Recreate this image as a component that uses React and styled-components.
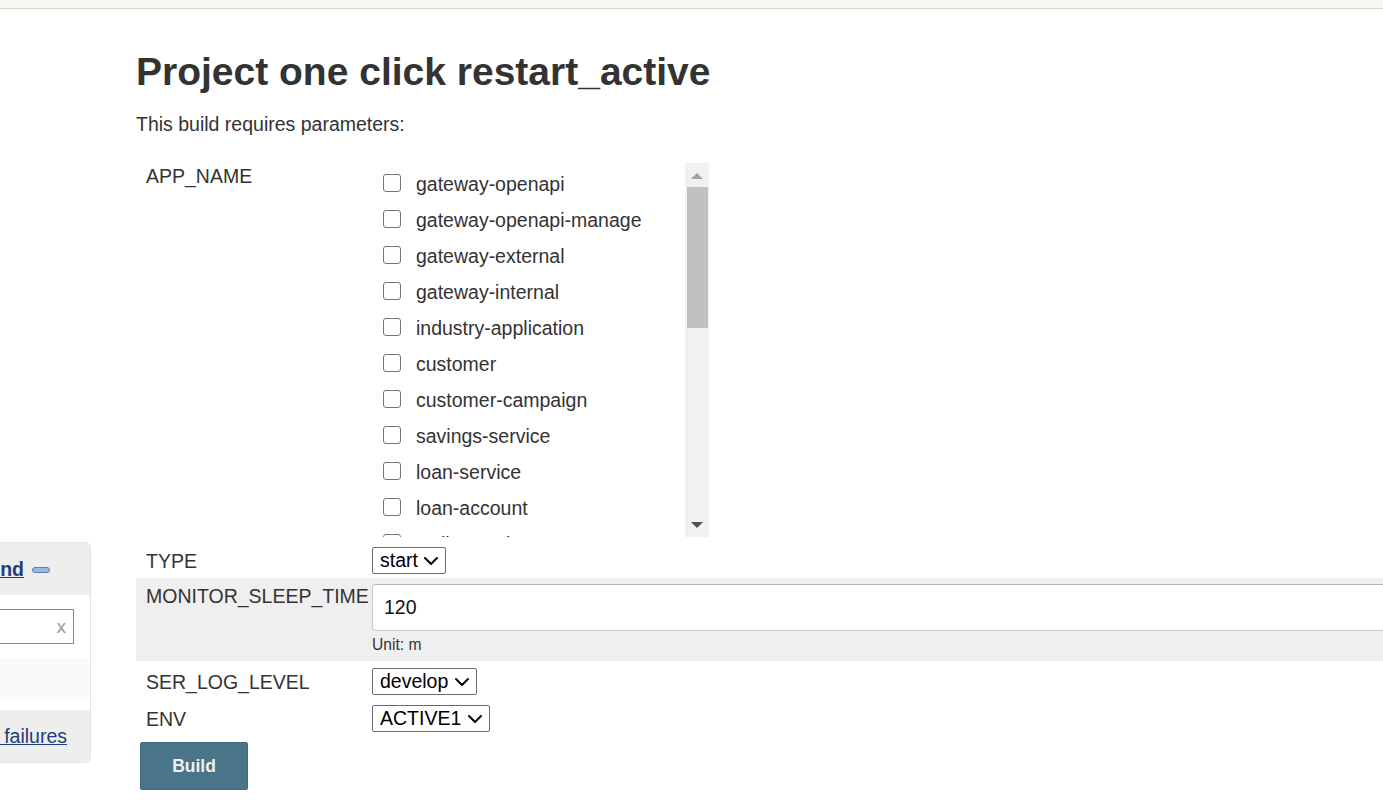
import React from 'react';
import styled, { createGlobalStyle } from 'styled-components';
import { ChevronDown } from 'lucide-react';

const apps = [
  'gateway-openapi',
  'gateway-openapi-manage',
  'gateway-external',
  'gateway-internal',
  'industry-application',
  'customer',
  'customer-campaign',
  'savings-service',
  'loan-service',
  'loan-account',
  'wallet-card',
];

const App = () => {
  return (
    <>
      <GlobalStyle />
      <TopBar />
      <Page>
        <SideColumn>
          <SideCard>
            <SideHeader>
              <SideLink $bold>Legend</SideLink>
              <Collapse />
            </SideHeader>
            <SideFilter>
              <FilterBox>
                <span>x</span>
              </FilterBox>
            </SideFilter>
            <SideEmpty />
            <SideFooter>
              <SideLink>Show all failures</SideLink>
            </SideFooter>
          </SideCard>
        </SideColumn>

        <Main>
          <Title>Project one click restart_active</Title>
          <Intro>This build requires parameters:</Intro>

          <ParamTable>
            <Row $pad="0 0 3px">
              <Label $top="2px">APP_NAME</Label>
              <CheckList>
                <CheckItems>
                  {apps.map((a) => (
                    <CheckItem key={a}>
                      <Box type="checkbox" />
                      <span>{a}</span>
                    </CheckItem>
                  ))}
                </CheckItems>
                <ScrollBar>
                  <Arrow $up />
                  <Thumb />
                  <Track />
                  <Arrow />
                </ScrollBar>
              </CheckList>
            </Row>

            <Row $pad="7px 0 4px" $center>
              <Label>TYPE</Label>
              <Dropdown value="start" />
            </Row>

            <Row $pad="6px 0 7px" $shaded>
              <Label $top="1px">MONITOR_SLEEP_TIME</Label>
              <div>
                <TextField defaultValue="120" />
                <Hint>Unit: m</Hint>
              </div>
            </Row>

            <Row $pad="7px 0 5px" $center>
              <Label>SER_LOG_LEVEL</Label>
              <Dropdown value="develop" />
            </Row>

            <Row $pad="5px 0 5px" $center>
              <Label>ENV</Label>
              <Dropdown value="ACTIVE1" />
            </Row>
          </ParamTable>

          <BuildButton>Build</BuildButton>
        </Main>
      </Page>
    </>
  );
};

const Dropdown = ({ value }) => (
  <SelectWrap>
    <Select defaultValue={value}>
      <option>{value}</option>
    </Select>
    <Chevron size={24} strokeWidth={2} />
  </SelectWrap>
);

//Styled Components
const GlobalStyle = createGlobalStyle`
  html, body {
    margin: 0;
    padding: 0;
    background: #fff;
    overflow: hidden;
  }
  body {
    font-family: "Liberation Sans", Arial, sans-serif;
    font-size: 19.5px;
    line-height: 1.15;
    color: #333;
  }
`;

const TopBar = styled.div`
  height: 8px;
  background: #f5f8f0;
  border-bottom: 1px solid #d3d6ce;
`;

const Page = styled.div`
  display: flex;
  align-items: flex-start;
`;

const SideColumn = styled.div`
  flex: 0 0 136px;
  padding-top: 533px;
`;

const SideCard = styled.div`
  width: 240px;
  margin-left: -151px;
  border: 1px solid #e4e4e4;
  border-radius: 6px;
  overflow: hidden;
  background: #fff;
`;

const SideHeader = styled.div`
  height: 52px;
  background: #eeeeee;
  display: flex;
  align-items: center;
  justify-content: flex-end;
  gap: 8px;
  padding-right: 40px;
`;

const SideLink = styled.a`
  color: #1d3f7a;
  text-decoration: underline;
  font-weight: ${(p) => (p.$bold ? 700 : 400)};
  white-space: nowrap;
`;

const Collapse = styled.span`
  width: 16px;
  height: 4px;
  border: 1px solid #5b80b5;
  border-radius: 3px;
  background: #9fb9dc;
  margin-top: 2px;
`;

const SideFilter = styled.div`
  height: 63px;
  display: flex;
  align-items: center;
  justify-content: flex-end;
  padding-right: 16px;
`;

const FilterBox = styled.div`
  width: 200px;
  height: 35px;
  border: 1px solid #8a8a8a;
  display: flex;
  align-items: center;
  justify-content: flex-end;
  padding-right: 7px;
  box-sizing: border-box;
  color: #9a9a9a;
  font-size: 19px;
`;

const SideEmpty = styled.div`
  height: 42px;
  background: #fafafa;
  margin-bottom: 10px;
`;

const SideFooter = styled.div`
  height: 52px;
  background: #eeeeee;
  display: flex;
  align-items: center;
  justify-content: flex-end;
  padding-right: 23px;
`;

const Main = styled.div`
  flex: 1;
  min-width: 1300px;
`;

const Title = styled.h1`
  margin: 40px 0 19px;
  font-size: 39px;
  line-height: 45px;
  font-weight: 700;
  color: #333;
`;

const Intro = styled.p`
  margin: 0 0 28px;
  line-height: 22px;
`;

const ParamTable = styled.div`
  display: flex;
  flex-direction: column;
`;

const Row = styled.div`
  display: grid;
  grid-template-columns: 236px 1fr;
  align-items: ${(p) => (p.$center ? 'center' : 'start')};
  padding: ${(p) => p.$pad};
  background: ${(p) => (p.$shaded ? '#efefef' : 'transparent')};
`;

const Label = styled.div`
  padding: ${(p) => p.$top || '0'} 0 0 10px;
  line-height: 22px;
  white-space: nowrap;
`;

const CheckList = styled.div`
  width: 337px;
  height: 374px;
  display: flex;
  overflow: hidden;
`;

const CheckItems = styled.div`
  flex: 1;
  padding: 3px 0 0 11px;
  display: flex;
  flex-direction: column;
`;

const CheckItem = styled.label`
  height: 36px;
  display: flex;
  align-items: center;
  gap: 15px;
  flex-shrink: 0;
  white-space: nowrap;
`;

const Box = styled.input`
  appearance: none;
  margin: 0 0 3px;
  width: 18px;
  height: 18px;
  border: 1px solid #767676;
  border-radius: 3px;
  background: #fff;
  box-sizing: border-box;
`;

const ScrollBar = styled.div`
  width: 24px;
  background: #f1f1f1;
  display: flex;
  flex-direction: column;
  align-items: center;
`;

const Arrow = styled.div`
  width: 0;
  height: 0;
  margin: ${(p) => (p.$up ? '10px 0 8px' : '8px 0 9px')};
  border-left: 6px solid transparent;
  border-right: 6px solid transparent;
  ${(p) =>
    p.$up
      ? 'border-bottom: 6px solid #a3a3a3;'
      : 'border-top: 6px solid #505050;'}
`;

const Thumb = styled.div`
  width: 21px;
  height: 141px;
  background: #c1c1c1;
`;

const Track = styled.div`
  flex: 1;
`;

const SelectWrap = styled.div`
  position: relative;
  display: inline-flex;
  justify-self: start;
`;

const Select = styled.select`
  appearance: none;
  font-family: "Liberation Sans", Arial, sans-serif;
  font-size: 19.5px;
  color: #000;
  height: 27px;
  padding: 0 27px 0 7px;
  border: 1px solid #6a6a6a;
  border-radius: 2px;
  background: #fff;
  line-height: 25px;
`;

const Chevron = styled(ChevronDown)`
  position: absolute;
  right: 3px;
  top: 50%;
  transform: translateY(-50%);
  color: #000;
  pointer-events: none;
`;

const TextField = styled.input`
  display: block;
  width: 100%;
  height: 47px;
  box-sizing: border-box;
  padding: 0 11px;
  margin-top: 0;
  border: 1px solid #c9c9c9;
  border-top-color: #b5b5b5;
  border-radius: 4px;
  font-family: "Liberation Sans", Arial, sans-serif;
  font-size: 19.5px;
  color: #111;
  background: #fff;
  margin-bottom: 5px;
`;

const Hint = styled.div`
  font-size: 15.6px;
  line-height: 18px;
  color: #333;
`;

const BuildButton = styled.button`
  margin: 5px 0 0 4px;
  width: 108px;
  height: 48px;
  background: #4a7487;
  color: #f0f0f0;
  font-family: "Liberation Sans", Arial, sans-serif;
  font-size: 17.5px;
  font-weight: 700;
  border: 1px solid #436a7c;
  border-radius: 2px;
`;

export default App;
